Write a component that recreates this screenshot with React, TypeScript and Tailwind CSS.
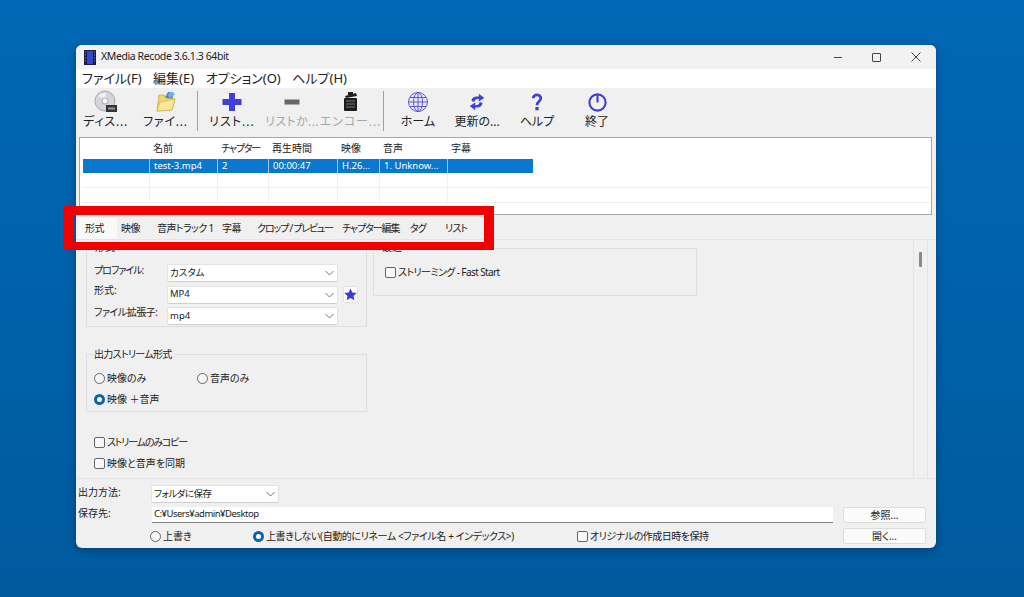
import React from "react";

const FONT = "font-['Noto_Sans','Noto_Sans_CJK_JP',sans-serif] [font-feature-settings:'palt']";

function Chevron() {
  return (
    <svg width="9" height="6" viewBox="0 0 9 6" className="shrink-0">
      <path d="M0.5 1 L4.5 5 L8.5 1" fill="none" stroke="#777" strokeWidth="1" />
    </svg>
  );
}

function Combo({ text, w, tx }: { text: string; w: string; tx?: string }) {
  return (
    <div className={`${w} h-[18px] shrink-0 bg-white border border-[#e3e3e3] border-b-[#cfcfcf] rounded-[2px] flex items-center justify-between pl-[2px] pr-[3px] text-[9.5px] text-[#222]`}>
      <span className={tx}>{text}</span>
      <Chevron />
    </div>
  );
}

function Check({ text, tx }: { text: string; tx?: string }) {
  return (
    <div className="flex items-center gap-[2px] text-[10px] text-[#222] h-[14px] whitespace-nowrap">
      <span className="w-[11px] h-[11px] shrink-0 rounded-[2px] border border-[#666] bg-[#f7f7f7]" />
      <span className={tx}>{text}</span>
    </div>
  );
}

function Radio({ text, on, cls, tx }: { text: string; on?: boolean; cls?: string; tx?: string }) {
  return (
    <div className={`flex items-center gap-[2px] text-[10px] text-[#222] h-[14px] whitespace-nowrap ${cls ?? ""}`}>
      {on ? (
        <span className="w-[11px] h-[11px] shrink-0 rounded-full bg-[#0a64b0] flex items-center justify-center">
          <span className="w-[5px] h-[5px] rounded-full bg-white" />
        </span>
      ) : (
        <span className="w-[11px] h-[11px] shrink-0 rounded-full border border-[#666] bg-[#f7f7f7]" />
      )}
      <span className={tx}>{text}</span>
    </div>
  );
}

const BLUE = "#3f3fdc";

const icons: Record<string, React.ReactNode> = {
  disc: (
    <svg width="24" height="24" viewBox="0 0 24 24">
      <circle cx="11" cy="11" r="10" fill="#d4d4dc" stroke="#9a9aa2" strokeWidth="0.8" />
      <path d="M4 6 A9 9 0 0 1 12 3 L11 9 Z" fill="#f2f2f6" />
      <circle cx="11" cy="11" r="3" fill="#fff" stroke="#999" strokeWidth="0.8" />
      <rect x="12" y="15" width="11" height="7" fill="#333" />
      <rect x="14" y="17.5" width="7" height="2" fill="#999" />
    </svg>
  ),
  folder: (
    <svg width="24" height="24" viewBox="0 0 24 24">
      <path d="M10 9 L14 2 L20 3 L18 10 Z" fill="#3f7fd0" />
      <path d="M13 5 L18 1.5 L21 4 L16 8 Z" fill="#6fb0e8" />
      <path d="M5 5 L10 5 L12 8 L21 9 L18 20 L3 21 Z" fill="#f0d774" stroke="#c9a93f" strokeWidth="0.8" />
      <path d="M6 12 L21 9 L18 20 L3 21 Z" fill="#f7e79a" stroke="#c9a93f" strokeWidth="0.6" />
    </svg>
  ),
  plus: (
    <svg width="22" height="22" viewBox="0 0 22 22">
      <path d="M8 2 H14 V8 H20.5 V14 H14 V20 H8 V14 H1.5 V8 H8 Z" fill={BLUE} />
    </svg>
  ),
  minus: (
    <svg width="22" height="22" viewBox="0 0 22 22">
      <rect x="3.5" y="8.5" width="15" height="5" fill="#666" />
    </svg>
  ),
  clapper: (
    <svg width="22" height="22" viewBox="0 0 22 22">
      <path d="M5 5 L16 2 L17 5 L6 7 Z" fill="#222" />
      <rect x="8" y="1" width="5" height="3" fill="#222" />
      <rect x="4" y="7" width="13" height="13" rx="1" fill="#1c1c1c" />
      <path d="M6 10 H15 M6 13 H15 M6 16 H15" stroke="#888" strokeWidth="0.9" />
    </svg>
  ),
  globe: (
    <svg width="22" height="22" viewBox="0 0 22 22" fill="none" stroke="#4f4fd8" strokeWidth="0.9">
      <circle cx="11" cy="11" r="9.5" fill="#e6e6f8" />
      <ellipse cx="11" cy="11" rx="4.5" ry="9.5" />
      <path d="M11 1.5 V20.5 M1.5 11 H20.5 M3 6.5 H19 M3 15.5 H19" />
    </svg>
  ),
  refresh: (
    <svg width="20" height="20" viewBox="0 0 22 22" fill={BLUE}>
      <path d="M5 10 C5 6 9 4.5 13 5 L13 2 L19 6.5 L13 10.5 L13 7.5 C10 7.5 8.5 8.5 8 11 Z" />
      <path d="M17 12 C17 16 13 17.5 9 17 L9 20 L3 15.5 L9 11.5 L9 14.5 C12 14.5 13.5 13.5 14 11 Z" />
    </svg>
  ),
  help: (
    <svg width="20" height="20" viewBox="0 0 22 22" fill="none">
      <path d="M6.8 7 C6.8 2 15.2 2 15.2 7 C15.2 10.5 11 10.5 11 14.5" stroke={BLUE} strokeWidth="3" />
      <rect x="9.2" y="16.5" width="3.6" height="3.6" fill={BLUE} />
    </svg>
  ),
  power: (
    <svg width="21" height="21" viewBox="0 0 22 22" fill="none" stroke="#3f3fd0" strokeWidth="2.2">
      <circle cx="11" cy="11" r="8.5" />
      <path d="M11 2.5 V11" />
    </svg>
  ),
};

function Tool({ icon, label, w, disabled, tx }: { icon: string; label: string; w: string; disabled?: boolean; tx?: string }) {
  return (
    <div className={`${w} shrink-0 flex flex-col items-center`}>
      <div className="h-[24px] w-[24px] flex items-center justify-center">{icons[icon]}</div>
      <div className={`text-[12px] leading-[16px] whitespace-nowrap ${tx ?? ""} ${disabled ? "text-[#a8a8a8]" : "text-[#222]"}`}>{label}</div>
    </div>
  );
}

const Sep = () => <div className="w-px h-[40px] mt-px bg-[#a0a0a0] shrink-0" />;

const cols = [
  { w: "w-[66px]", h: "", v: "", tx: "" },
  { w: "w-[68px]", h: "名前", v: "test-3.mp4", tx: "" },
  { w: "w-[51px]", h: "チャプター", v: "2", tx: "tracking-[-1.2px]" },
  { w: "w-[69px]", h: "再生時間", v: "00:00:47", tx: "" },
  { w: "w-[42px]", h: "映像", v: "H.26...", tx: "" },
  { w: "w-[68px]", h: "音声", v: "1. Unknow...", tx: "" },
  { w: "w-[86px]", h: "字幕", v: "", tx: "" },
];

const tabs = [
  { t: "形式", w: "w-[38px]", tx: "tracking-[-0.6px]" },
  { t: "映像", w: "w-[36px]", tx: "tracking-[-0.6px]" },
  { t: "音声トラック 1", w: "w-[65px]", tx: "tracking-[-0.6px]" },
  { t: "字幕", w: "w-[35px]", tx: "tracking-[-0.6px]" },
  { t: "クロップ / プレビュー", w: "w-[85px]", tx: "tracking-[-1.2px]" },
  { t: "チャプター編集", w: "w-[68px]", tx: "tracking-[-1.1px]" },
  { t: "タグ", w: "w-[35px]", tx: "tracking-[-1px]" },
  { t: "リスト", w: "w-[40px]", tx: "tracking-[-0.8px]" },
];

export default function App() {
  return (
    <div className={`relative w-[1024px] h-[597px] overflow-hidden bg-gradient-to-b from-[#0068b6] to-[#005a9e] pt-[45px] pl-[76px] ${FONT}`}>
      <div className="w-[860px] h-[503px] rounded-[6px] bg-[#f0f0f0] flex flex-col overflow-hidden shadow-[0_2px_10px_rgba(0,0,0,0.3)]">
        {/* title bar */}
        <div className="h-[24px] shrink-0 flex items-center pl-[8px] bg-[#f2f2f2]">
          <svg width="12" height="15" viewBox="0 0 12 15" className="shrink-0">
            <rect width="12" height="15" fill="#1a1a50" />
            <rect x="3" y="1" width="6" height="13" fill="#3348c8" />
            <path d="M1 2 H2 M1 5 H2 M1 8 H2 M1 11 H2 M10 2 H11 M10 5 H11 M10 8 H11 M10 11 H11" stroke="#9090c0" />
          </svg>
          <span className="ml-[5px] text-[10.5px] tracking-[-0.4px] text-[#222]">XMedia Recode 3.6.1.3 64bit</span>
          <div className="ml-auto flex items-center h-full text-[#333]">
            <div className="w-[39px] flex justify-center">
              <div className="w-[8px] h-px bg-[#444]" />
            </div>
            <div className="w-[39px] flex justify-center">
              <div className="w-[9px] h-[9px] border border-[#444] rounded-[1px]" />
            </div>
            <div className="w-[39px] flex justify-center">
              <svg width="10" height="10" viewBox="0 0 10 10">
                <path d="M0.5 0.5 L9.5 9.5 M9.5 0.5 L0.5 9.5" stroke="#444" strokeWidth="1" />
              </svg>
            </div>
            <div className="w-[1px]" />
          </div>
        </div>
        {/* menu */}
        <div className="h-[19px] shrink-0 bg-white flex items-center pl-[6px] gap-[11.5px] text-[13px] text-[#222]">
          <span>ファイル(F)</span>
          <span>編集(E)</span>
          <span>オプション(O)</span>
          <span>ヘルプ(H)</span>
        </div>
        {/* toolbar */}
        <div className="h-[49px] shrink-0 flex items-start pt-[2px] pl-[1px]">
          <Tool icon="disc" label="ディス..." w="w-[57px]" tx="tracking-[0.8px]" />
          <Tool icon="folder" label="ファイ..." w="w-[63px]" tx="tracking-[0.8px]" />
          <Sep />
          <Tool icon="plus" label="リスト..." w="w-[68px]" tx="tracking-[1px]" />
          <Tool icon="minus" label="リストか..." w="w-[52px]" disabled tx="tracking-[0.4px]" />
          <Tool icon="clapper" label="エンコー..." w="w-[65px]" disabled tx="tracking-[0.9px]" />
          <Sep />
          <Tool icon="globe" label="ホーム" w="w-[68px]" />
          <Tool icon="refresh" label="更新の..." w="w-[50px]" />
          <Tool icon="help" label="ヘルプ" w="w-[70px]" />
          <Tool icon="power" label="終了" w="w-[50px]" />
        </div>
        {/* file list */}
        <div className="ml-[3px] mr-[4px] h-[78px] shrink-0 bg-white border border-[#a8a8a8] pl-[3px]">
          <div className="flex h-[21px] text-[10px] text-[#222] items-center">
            {cols.map((c, i) => (
              <div key={i} className={`${c.w} pl-[4px] whitespace-nowrap ${c.tx}`}>{c.h}</div>
            ))}
          </div>
          <div className="flex w-fit h-[14px] bg-[#0a78d0] text-[9.5px] text-white items-center">
            {cols.map((c, i) => (
              <div key={i} className={`${c.w} h-full pl-[4px] flex items-center whitespace-nowrap ${i ? "border-l border-[#9cc8ea]" : ""}`}>{c.v}</div>
            ))}
          </div>
          {[0, 1].map((r) => (
            <div key={r} className="flex h-[15px] border-b border-[#f0f0f0]">
              {cols.map((c, i) => (
                <div key={i} className={`${c.w} h-full ${i ? "border-l border-[#f0f0f0]" : ""}`} />
              ))}
            </div>
          ))}
        </div>
        {/* tabs */}
        <div className="h-[25px] shrink-0 flex items-end pl-[3px] border-b border-[#e4e4e4]">
          {tabs.map((t, i) => (
            <div key={i} className={`${t.w} h-[21px] flex items-center text-[10px] ${t.tx} text-[#222] whitespace-nowrap ${i === 0 ? "bg-[#f9f9f9] pl-[6px]" : "pl-[4px]"}`}>{t.t}</div>
          ))}
        </div>
        {/* tab pane */}
        <div className="h-[239px] shrink-0 flex border-b border-[#e4e4e4] overflow-hidden">
          <div className="w-[838px] shrink-0 flex items-start pl-[10px] gap-[6px] border-r border-[#e4e4e4]">
            <div className="w-[281px] shrink-0 flex flex-col">
              {/* format group */}
              <div className="relative mt-[6px] h-[81px] border border-[#dfdfdf] pt-[17px] pl-[7px] flex flex-col gap-[3.5px]">
                <span className="absolute -top-[7px] left-[7px] bg-[#f0f0f0] px-px text-[10px] leading-[14px] text-[#222]">形式</span>
                <div className="flex items-center h-[18px] text-[10px] text-[#222]">
                  <span className="w-[73px] shrink-0 whitespace-nowrap -mt-[5px] tracking-[-1px]">プロファイル:</span>
                  <Combo text="カスタム" w="w-[171px]" />
                </div>
                <div className="flex items-center h-[18px] text-[10px] text-[#222]">
                  <span className="w-[73px] shrink-0 whitespace-nowrap -mt-[9px]">形式:</span>
                  <Combo text="MP4" w="w-[171px]" />
                  <div className="ml-[5px] w-[15px] h-[17px] bg-[#fafafa] border border-[#e3e3e3] rounded-[2px] flex items-center justify-center">
                    <svg width="13" height="13" viewBox="0 0 24 24">
                      <path d="M12 1 L15.4 8.3 L23.4 9.2 L17.5 14.6 L19.1 22.5 L12 18.5 L4.9 22.5 L6.5 14.6 L0.6 9.2 L8.6 8.3 Z" fill="#3a3adf" />
                    </svg>
                  </div>
                </div>
                <div className="flex items-center h-[18px] text-[10px] text-[#222]">
                  <span className="w-[73px] shrink-0 whitespace-nowrap -mt-[7px] tracking-[-0.5px]">ファイル拡張子:</span>
                  <Combo text="mp4" w="w-[171px]" />
                </div>
              </div>
              {/* stream group */}
              <div className="relative mt-[27px] h-[58px] border border-[#dfdfdf] pt-[16px] pl-[7px] flex flex-col gap-[7px]">
                <span className="absolute -top-[8px] left-[6px] bg-[#f0f0f0] pr-[3px] pl-px text-[10px] leading-[14px] tracking-[-0.7px] text-[#222]">出力ストリーム形式</span>
                <div className="flex">
                  <Radio text="映像のみ" cls="w-[103px]" />
                  <Radio text="音声のみ" />
                </div>
                <Radio text="映像 ＋音声" on />
              </div>
              <div className="mt-[23px] pl-[8px] flex flex-col gap-[7px]">
                <Check text="ストリームのみコピー" tx="tracking-[-1.2px]" />
                <Check text="映像と音声を同期" />
              </div>
            </div>
            <div className="relative mt-[8px] w-[324px] h-[48px] shrink-0 border border-[#dfdfdf] pt-[16px] pl-[11px]">
              <span className="absolute -top-[9px] left-[7px] bg-[#f0f0f0] px-px text-[10px] leading-[14px] text-[#222]">最適</span>
              <Check text="ストリーミング - Fast Start" tx="tracking-[-0.6px]" />
            </div>
          </div>
          <div className="w-[14px] shrink-0 border-r border-[#e4e4e4] flex justify-center pt-[12px]">
            <div className="w-[3px] h-[15px] bg-[#8a8a8a] rounded-[1px]" />
          </div>
        </div>
        {/* bottom */}
        <div className="flex-1 flex flex-col pl-[2px] pr-[10px] pt-[6px]">
          <div className="flex items-center h-[18px] text-[10px] text-[#222]">
            <span className="w-[73px] -mt-[4px]">出力方法:</span>
            <Combo text="フォルダに保存" w="w-[128px]" tx="tracking-[-0.5px]" />
          </div>
          <div className="flex items-center h-[16px] mt-[4px] text-[10px] text-[#222]">
            <span className="w-[74px] -mt-[3px]">保存先:</span>
            <div className="w-[681px] h-[16px] bg-white border-b border-[#808080] pl-[2px] flex items-center text-[9.5px] tracking-[-0.5px]">C:¥Users¥admin¥Desktop</div>
            <div className="ml-[10px] w-[83px] h-[16px] bg-[#fbfbfb] border border-[#dcdcdc] rounded-[3px] flex items-center justify-center">参照...</div>
          </div>
          <div className="flex items-center h-[16px] mt-[5px] pl-[72px] text-[10px] text-[#222]">
            <Radio text="上書き" cls="w-[103px]" />
            <Radio text="上書きしない(自動的にリネーム <ファイル名 + インデックス>)" on cls="w-[324px]" tx="tracking-[-0.4px]" />
            <Check text="オリジナルの作成日時を保持" tx="tracking-[-0.5px]" />
            <div className="ml-auto w-[83px] h-[16px] bg-[#fbfbfb] border border-[#dcdcdc] rounded-[3px] flex items-center justify-center">開く...</div>
          </div>
        </div>
      </div>
      {/* red annotation frame */}
      <div className="absolute left-[63px] top-[206px] w-[431px] h-[44px] border-x-[10px] border-t-[9px] border-b-[8px] border-[#f00000]" />
    </div>
  );
}
